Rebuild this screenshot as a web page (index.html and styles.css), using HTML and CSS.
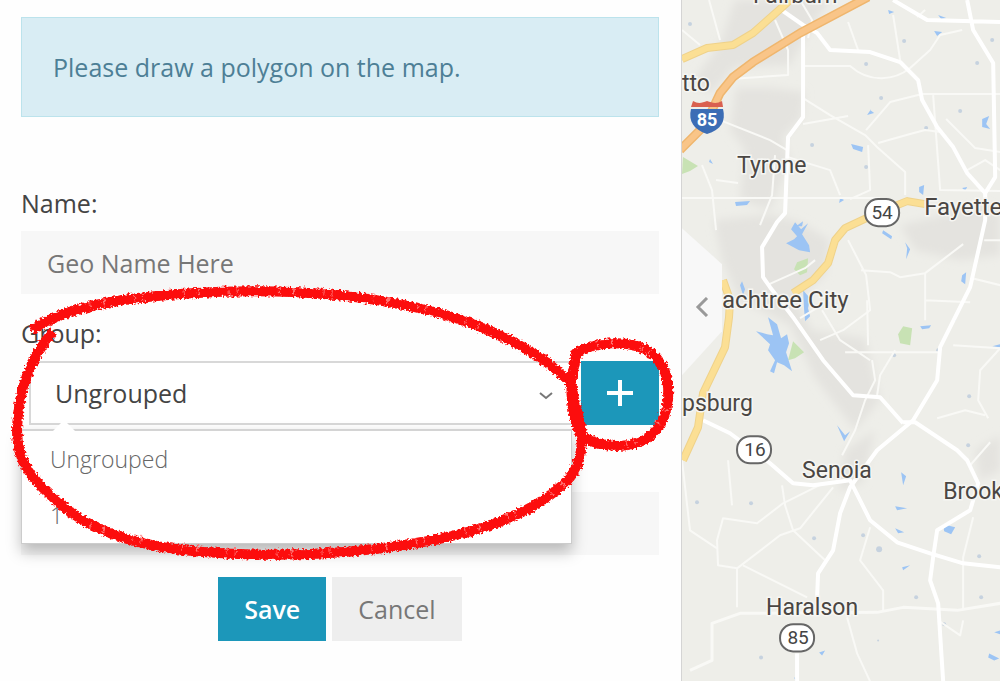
FILE: index.html
```html
<!DOCTYPE html>
<html lang="en">
<head>
    <meta charset="UTF-8">
    <meta name="viewport" content="width=device-width, initial-scale=1.0">
    <title>Geofence</title>
    <link rel="stylesheet" href="styles.css">
</head>
<body>
    <div class="layout">
        <main class="panel">
            <div class="alert" role="status">Please draw a polygon on the map.</div>

            <form class="geo-form">
                <div class="field">
                    <label for="geoName">Name:</label>
                    <input class="text-input" type="text" id="geoName" placeholder="Geo Name Here">
                </div>

                <div class="field">
                    <label for="geoGroup">Group:</label>
                    <div class="group-row">
                        <div class="group-select">
                            <select id="geoGroup">
                                <option>Ungrouped</option>
                                <option>1</option>
                            </select>
                            <svg class="select-arrow" viewBox="0 0 16 10" aria-hidden="true"><path d="M2 2l6 5 6-5"/></svg>
                            <ul class="group-menu">
                                <li><button type="button">Ungrouped</button></li>
                                <li><button type="button">1</button></li>
                            </ul>
                        </div>
                        <button class="btn-add" type="button" aria-label="Add group">
                            <svg viewBox="0 0 28 28" aria-hidden="true"><path d="M14 1v26M1 14h26"/></svg>
                        </button>
                    </div>
                </div>

                <div class="field field-extra">
                    <input class="text-input" type="text" aria-label="Description">
                </div>

                <div class="actions">
                    <button class="btn btn-save" type="submit">Save</button>
                    <button class="btn btn-cancel" type="button">Cancel</button>
                </div>
            </form>

            <!-- Hand drawn marker rings -->
            <svg class="marker" viewBox="0 0 682 681" aria-hidden="true">
                <defs>
                    <filter id="rough" x="-5%" y="-5%" width="110%" height="110%">
                        <feTurbulence type="fractalNoise" baseFrequency="0.4" numOctaves="2" seed="4" result="n"/>
                        <feDisplacementMap in="SourceGraphic" in2="n" scale="6" xChannelSelector="R" yChannelSelector="G"/>
                    </filter>
                </defs>
                <g filter="url(#rough)">
                    <path class="ring" d="M32 331C64 307 125 298 188 294C292 287 398 296 478 326C520 343 550 361 572 384"/>
                    <path class="ring" d="M53 332C31 359 18 389 17 431C17 464 33 483 68 511C102 537 147 548 204 553C282 559 350 555 412 545C467 536 520 521 555 493C578 476 583 461 583 436C581 411 572 400 572 380"/>
                    <path class="ring" d="M574 356C593 342 633 338 654 355C673 371 674 405 660 427C647 448 611 453 584 438C575 428 571 398 573 378C575 368 576 362 577 355"/>
                    <path class="streaks" d="M90 306C150 294 235 289 310 292C370 295 430 307 480 326"/>
                    <path class="streaks" d="M90 526C160 550 250 558 340 552C440 545 530 522 570 478"/>
                    <path class="streaks" d="M598 345C625 340 655 348 666 373M666 410C652 445 620 450 594 443"/>
                </g>
            </svg>
        </main>

        <section class="map" aria-label="Map">
            <svg class="map-canvas" viewBox="682 0 318 681" preserveAspectRatio="xMinYMin slice">
                <defs>
                    <filter id="soft" x="-20%" y="-20%" width="140%" height="140%"><feGaussianBlur stdDeviation="4"/></filter>
                </defs>

                <!-- Towns -->
                <g class="urban" filter="url(#soft)">
                    <path d="M735 0H830L812 26L790 65L735 67L712 92L690 85L720 44Z"/>
                    <path d="M736 88H770L805 92L801 119L782 137L790 160L770 210L740 200L745 150L730 130Z"/>
                    <path d="M714 220L770 214L800 222L830 240L825 275L795 300L812 330L865 338L880 400L855 430L815 378L790 325L740 300L722 260Z"/>
                    <path d="M900 225L985 205L1000 215V255L960 260L915 250Z"/>
                    <path d="M845 450L875 430L863 482L838 492Z"/>
                    <path d="M975 450L1000 435V470L980 480Z"/>
                </g>

                <g class="parks">
                    <path d="M683 157L698 166L690 171L682 174Z"/>
                    <path d="M797 262L808 258L807 272L800 275L794 269Z"/>
                    <path d="M793 341L804 352L795 358L788 360Z"/>
                    <path d="M898 334L903 326L912 328L910 345L900 343Z"/>
                </g>

                <g class="water">
                    <path d="M795 222L801 229L808 223L802 234L809 245L810 252L799 250L786 243L794 239L797 236L791 229Z"/>
                    <path d="M756 331L767 334L773 335L768 317L777 324L781 338L787 334L789 343L786 352L792 371L784 365L777 362L774 373L770 371L775 360L768 350L770 344Z"/>
                    <path d="M803 290l7 8-2 10 2 8-5 5-1-12zM742 281l3 8-2 6-3-10zM962 275l4-3-1 12-4-3zM851 144l12 3-1 5-9-3zM870 110l4 3-7 2 4-6zM919 187l5-2-1 10-4-3zM982 119l7-3-3 8 4 5-8-2zM735 202l15-1-3 4-11 1zM840 198l4 2-5 3zM883 230l9 6-1 3-9-6zM905 242l5 7-4 10 1-11zM920 326l11-1-2 3-7 1zM992 346l8-2v3zM951 321l5-1-3 2zM888 10l6 2-5 2zM962 188l5-1-2 4zM901 472l5 4-3 9zM895 506l12 2-10 2zM895 528l9 4-6 1zM943 524l12 3-4 7-7-3zM989 653l10 5-5 2-6-3zM994 632l6-2v4zM902 567l8-2-7 5zM837 425l8 10 5-4-6 10zM819 652l6-2-3 5zM735 312l14-1zM710 159l3 5-4-2zM796 226l7-5-1 5zM938 15l8 3-5 1zM934 31l8 1-5 4zM794 677l5 1-3 3z"/>
                </g>
                <g class="ponds">
                    <circle cx="690" cy="24" r="2"/><circle cx="866" cy="64" r="2"/><circle cx="904" cy="41" r="2"/><circle cx="881" cy="98" r="2"/><circle cx="992" cy="40" r="2"/><circle cx="977" cy="63" r="2"/><circle cx="812" cy="145" r="2"/><circle cx="960" cy="111" r="2"/><circle cx="926" cy="128" r="2"/><circle cx="866" cy="167" r="2"/><circle cx="751" cy="503" r="2"/><circle cx="697" cy="502" r="2"/><circle cx="814" cy="538" r="2"/><circle cx="863" cy="535" r="2"/><circle cx="879" cy="549" r="3"/><circle cx="916" cy="597" r="2"/><circle cx="981" cy="597" r="2"/><circle cx="944" cy="624" r="2"/><circle cx="761" cy="657" r="2"/><circle cx="979" cy="556" r="2"/><circle cx="878" cy="640" r="1"/><circle cx="969" cy="396" r="2"/><circle cx="894" cy="355" r="2"/><circle cx="938" cy="350" r="2"/><circle cx="968" cy="445" r="2"/>
                </g>

                <g class="road-minor">
                    <path d="M709 0L720 40M800 0L812 20L808 38M775 20L788 50V75L730 79"/>
                    <path d="M803 66H850C870 84 895 80 910 68L930 50L940 35L962 30"/>
                    <path d="M803 98L830 115L865 135L878 148L905 172V195M803 124L848 116M866 130L890 102L922 94H1000"/>
                    <path d="M893 15L900 60M848 22L858 50M878 143L910 134L925 130L940 132"/>
                    <path d="M946 119L975 148L1000 152M933 95L940 190L1000 191M868 145L870 190L850 199M967 170L985 160L1000 170"/>
                    <path d="M682 30L700 45M720 120L770 140L787 150M702 165L712 190L716 230M716 180L738 183M682 198H880M775 155L772 195L760 225M788 157L830 170L840 195"/>
                    <path d="M848 240L866 275L870 310L843 330L820 340M861 270L890 272L900 277L925 273L963 244M925 273V320M925 300L970 302M984 240H1000M972 278L1000 285M953 345L1000 348L980 370L978 400L988 418"/>
                    <path d="M822 310L840 340L855 350L870 360M845 352H940M872 360L875 380L865 400L855 430L842 455M895 350L880 375L877 395"/>
                    <path d="M767 285L805 268L815 260M937 418L965 410L985 415M728 460L732 505M682 460L690 530L717 548M782 485L785 505L793 530L825 560M743 565L807 597M737 568V607"/>
                    <path d="M823 483L783 503L757 523L723 518L717 540L718 565L737 568L780 535L800 528L833 487"/>
                    <path d="M870 527L860 560L883 590V610M973 517L963 557V610M847 617L857 653L870 681M938 620L960 635L963 620"/>
                    <path d="M990 442L970 465M830 300L800 318M867 300L868 345M925 10L917 17"/>
                    <path class="road-wide" d="M690 670L712 660V623L740 613L877 612L903 607L957 610L1000 603"/>
                </g>

                <g class="road-main">
                    <path d="M780 9L803 25L817 33L830 50L870 52L900 62L918 80L922 100L937 127L953 147L967 173L985 193"/>
                    <path d="M803 33V117L788 137L785 213L777 222L762 247L763 277L770 287L793 317L823 360L853 395L880 397L903 423"/>
                    <path d="M893 0L927 20L1000 22M967 0L973 30L993 63L995 177L985 193V220L970 287L940 347L937 380L913 420L877 450L850 487L840 513L833 550L818 573L817 597"/>
                    <path d="M903 422H915L957 450L967 460L978 483L970 510L937 530L933 557L930 580L938 603L943 681"/>
                    <path d="M703 420L730 433L770 463L793 483L813 485L850 480L870 520L897 542L930 553L963 563L1000 567M797 653V681"/>
                </g>

                <g class="highway-edge">
                    <path d="M790 0L779 10L753 33L733 45L707 48L682 59"/>
                    <path d="M723 280L730 300L729 317L725 347L703 393L698 427L683 460"/>
                    <path d="M925 204L907 201L877 213L845 228L835 240L828 263L813 280L793 293"/>
                </g>
                <g class="highway">
                    <path d="M790 0L779 10L753 33L733 45L707 48L682 59"/>
                    <path d="M723 280L730 300L729 317L725 347L703 393L698 427L683 460"/>
                    <path d="M925 204L907 201L877 213L845 228L835 240L828 263L813 280L793 293"/>
                </g>
                <path class="interstate-edge" d="M868 -3L800 33L753 62L733 77L720 93L705 125L680 150"/>
                <path class="interstate" d="M868 -3L800 33L753 62L733 77L720 93L705 125L680 150"/>

                <g class="shield-us">
                    <path class="shield-red" d="M693 101C698 104 702 103 707 101C712 103 717 104 722 101L723 107H691Z"/>
                    <path class="shield-blue" d="M691 109H723C726 121 721 130 707 134C694 130 688 121 691 109Z"/>
                    <text x="707" y="126">85</text>
                </g>
                <g class="shield">
                    <rect x="865" y="199" width="34" height="27" rx="13"/><text x="882" y="219">54</text>
                    <rect x="737" y="436" width="34" height="27" rx="13"/><text x="755" y="456">16</text>
                    <rect x="780" y="624" width="34" height="27" rx="13"/><text x="798" y="644">85</text>
                </g>

                <path class="handle-shape" d="M682 228L722 264V331L682 375Z"/>

                <g class="places">
                    <text x="753" y="3">Fairburn</text>
                    <text x="682" y="91">tto</text>
                    <text x="737" y="173">Tyrone</text>
                    <text class="city" x="924" y="215">Fayette</text>
                    <text class="city" x="722" y="308">achtree City</text>
                    <text x="682" y="411">psburg</text>
                    <text x="802" y="478">Senoia</text>
                    <text x="943" y="499">Brook</text>
                    <text x="766" y="615">Haralson</text>
                </g>
            </svg>
            <button class="map-toggle" type="button" aria-label="Collapse map">
                <svg viewBox="0 0 14 20" aria-hidden="true"><path d="M12 1L3 10l9 9"/></svg>
            </button>
        </section>
    </div>
</body>
</html>
```
FILE: styles.css
```css
* {
    box-sizing: border-box;
}
body {
    margin: 0;
    background: #fefefe;
    color: #444;
    font-family: "Open Sans", sans-serif;
    font-size: 25px;
    line-height: 32px;
}
button, input, select {
    font: inherit;
    border: none;
    border-radius: 0;
    margin: 0;
}
button {
    cursor: pointer;
}
.layout {
    display: grid;
    grid-template-columns: 15fr 7fr;
    min-height: 100vh;
}

/* Form panel */
.panel {
    position: relative;
    padding: 17px 22px 0 21px;
    border-right: 1px solid #d4d4d4;
}
.alert {
    padding: 33px 31px;
    background: #d9edf4;
    border: 1px solid #bce3ec;
    color: #4d7f96;
}
.geo-form {
    padding-top: 70px;
}
.field {
    display: flex;
    flex-direction: column;
    gap: 12px;
    margin-bottom: 23px;
}
.text-input {
    width: 100%;
    height: 63px;
    padding: 0 26px;
    background: #f7f7f7;
    color: #777;
}
.text-input::placeholder {
    color: #777;
    opacity: 1;
}
.group-row {
    display: flex;
    gap: 8px;
    height: 64px;
    padding-left: 8px;
}
.group-select {
    position: relative;
    flex: 1;
}
.group-select select {
    appearance: none;
    width: 100%;
    height: 64px;
    padding: 0 24px;
    background: #fff;
    border: 2px solid #d8d8d8;
    color: #444;
}
.select-arrow {
    position: absolute;
    right: 19px;
    top: 30px;
    width: 16px;
    height: 10px;
    fill: none;
    stroke: #777;
    stroke-width: 2;
}
.group-menu {
    position: absolute;
    z-index: 2;
    top: 68px;
    left: -8px;
    right: 1px;
    margin: 0;
    padding: 0;
    list-style: none;
    background: #fff;
    border: 1px solid #ccc;
    border-top: 2px solid #d4d4d4;
    box-shadow: 0 8px 14px rgba(0, 0, 0, 0.25);
}
.group-menu::before {
    content: "";
    position: absolute;
    top: -11px;
    left: 30px;
    border: 12px solid transparent;
    border-top: none;
    border-bottom-color: #fff;
}
.group-menu button {
    display: block;
    width: 100%;
    padding: 12px 28px;
    background: none;
    color: #666;
    font-size: 23px;
    font-weight: 300;
    text-align: left;
}
.btn-add {
    display: flex;
    align-items: center;
    justify-content: center;
    width: 78px;
    background: #1c97ba;
}
.btn-add svg {
    width: 28px;
    height: 28px;
    fill: none;
    stroke: #fff;
    stroke-width: 4;
}
.field-extra {
    padding-top: 44px;
    margin-bottom: 22px;
}
.actions {
    display: flex;
    justify-content: center;
    gap: 6px;
}
.btn {
    height: 64px;
    padding: 0 26px;
}
.btn-save {
    background: #1c97ba;
    color: #fff;
    font-weight: 600;
}
.btn-cancel {
    background: #eee;
    color: #777;
}
.marker {
    position: absolute;
    z-index: 3;
    top: 0;
    left: 0;
    width: 100%;
    overflow: visible;
    pointer-events: none;
}
.ring {
    fill: none;
    stroke: #fc0808;
    stroke-width: 10;
}
.streaks {
    fill: none;
    stroke: #ff7474;
    stroke-width: 7;
    stroke-dasharray: 1 13 2 29 1 7 1 41;
}

/* Map */
.map {
    position: relative;
    overflow: hidden;
    background: #eeeee9;
}
.map-canvas {
    position: absolute;
    width: 100%;
    height: 100%;
    font-family: Roboto, sans-serif;
}
.urban {
    fill: #e4e3df;
}
.parks {
    fill: #c8e2b4;
}
.water {
    fill: #9cc4f4;
}
.ponds {
    fill: #c6d2df;
}
.road-minor, .road-main, .highway, .highway-edge, .interstate, .interstate-edge {
    fill: none;
    stroke-linejoin: round;
}
.road-minor {
    stroke: #f9f9f6;
    stroke-width: 2;
}
.road-wide {
    stroke-width: 3;
}
.road-main {
    stroke: #fff;
    stroke-width: 4;
}
.highway-edge {
    stroke: #efd28a;
    stroke-width: 8;
}
.highway {
    stroke: #fbdf94;
    stroke-width: 6;
}
.interstate-edge {
    stroke: #efb66e;
    stroke-width: 9;
}
.interstate {
    stroke: #f9c588;
    stroke-width: 6;
}
.places text {
    fill: #4a4643;
    font-size: 23px;
    stroke: #f6f6f3;
    stroke-width: 3;
    paint-order: stroke;
}
.places .city {
    font-size: 24px;
}
.shield rect {
    fill: #fff;
    stroke: #666;
    stroke-width: 2;
}
.shield text {
    fill: #444;
    font-size: 19px;
    text-anchor: middle;
}
.shield-red {
    fill: #d9604f;
}
.shield-blue {
    fill: #3c6db5;
}
.shield-us text {
    fill: #fff;
    font-size: 18px;
    font-weight: 700;
    text-anchor: middle;
}
.handle-shape {
    fill: #f8f8f8;
}
.map-toggle {
    position: absolute;
    top: 264px;
    left: 0;
    width: 40px;
    height: 86px;
    padding: 0 0 0 13px;
    background: none;
    text-align: left;
}
.map-toggle svg {
    display: block;
    width: 14px;
    height: 20px;
    fill: none;
    stroke: #999;
    stroke-width: 3;
}
```
